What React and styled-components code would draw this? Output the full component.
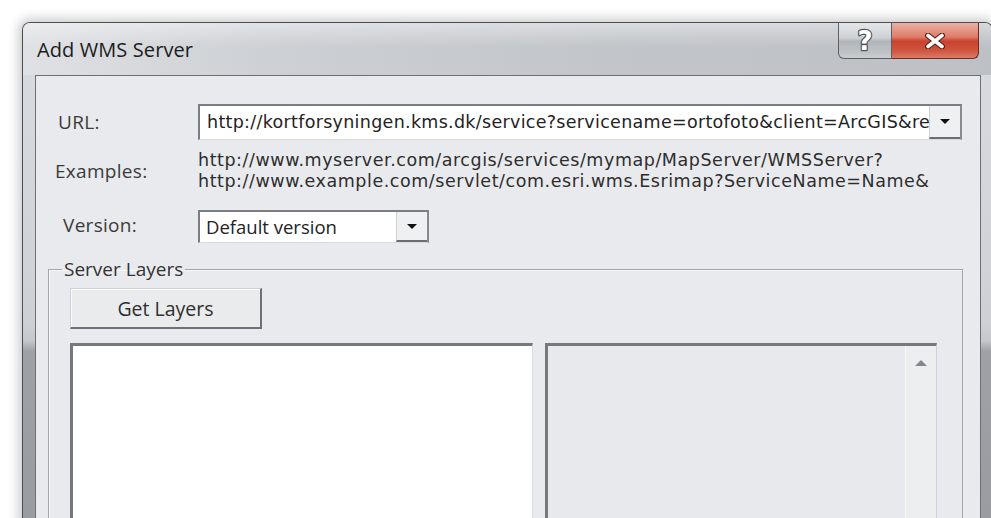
import React from "react";
import styled, { createGlobalStyle } from "styled-components";

const Global = createGlobalStyle`
  html, body { margin: 0; padding: 0; background: #ffffff; overflow: hidden; }
  body { font-family: "Open Sans", "Noto Sans", sans-serif; }
  * { box-sizing: border-box; }
`;

const Page = styled.div`
  width: 991px;
  height: 518px;
  overflow: hidden;
  padding: 22px 0 0 22px;
  background: #ffffff;
`;

const Window = styled.div`
  width: 971px;
  height: 520px;
  border: 1px solid #4a4d51;
  border-bottom: none;
  border-radius: 8px 8px 0 0;
  overflow: hidden;
  box-shadow: 0 0 12px 3px rgba(0, 0, 0, 0.22);
  background: linear-gradient(
    to bottom,
    #d9dce0 0px,
    #cdd0d4 300px,
    #c4c7cb 318px,
    #9ea2a7 328px,
    #989ca1 100%
  );
  display: flex;
  flex-direction: column;
`;

const TitleBar = styled.div`
  height: 52px;
  flex: none;
  display: flex;
  align-items: flex-start;
  justify-content: space-between;
  background:
    linear-gradient(to bottom, rgba(255, 255, 255, 0.4), rgba(255, 255, 255, 0) 45%),
    linear-gradient(to right, #dfe1e4 0%, #cdd0d4 25%, #c2c5c9 60%, #bdc0c4 100%);
`;

const Title = styled.div`
  padding: 15px 0 0 14px;
  font-size: 20px;
  line-height: 24px;
  color: #1c1c1c;
  letter-spacing: 0.1px;
`;

const CaptionButtons = styled.div`
  display: flex;
  margin-right: 13px;
`;

const CaptionButton = styled.div`
  height: 36px;
  width: ${(p) => p.$w}px;
  display: flex;
  align-items: center;
  justify-content: center;
  border: 1px solid ${(p) => (p.$close ? "#6a2c24" : "#5c6064")};
  border-top: none;
  border-radius: ${(p) => (p.$close ? "0 0 6px 0" : "0 0 0 6px")};
  background: ${(p) =>
    p.$close
      ? "linear-gradient(to bottom, #eab0a3 0%, #de7c69 40%, #c8432e 52%, #cf5640 80%, #dc7c66 100%)"
      : "linear-gradient(to bottom, #e4e6e8 0%, #cfd2d5 42%, #b2b6ba 52%, #bec1c4 80%, #cacdd0 100%)"};
  & + & {
    border-left: none;
  }
`;

const Client = styled.div`
  flex: 1;
  margin: 0 11px 0 12px;
  border: 1px solid #6c7075;
  border-bottom: none;
  background: #e9eaed;
  padding-top: 28px;
  display: flex;
  flex-direction: column;
`;

const FormGrid = styled.div`
  display: grid;
  grid-template-columns: 162px minmax(0, 1fr);
  align-items: center;
  padding-right: 18px;
`;

const Label = styled.div`
  padding-left: ${(p) => p.$indent}px;
  margin-top: ${(p) => p.$shift || 0}px;
  font-size: 19px;
  letter-spacing: 0.3px;
  color: #3b3b3b;
`;

const ComboBox = styled.div`
  width: ${(p) => (p.$w ? `${p.$w}px` : "100%")};
  height: ${(p) => p.$h}px;
  margin-top: ${(p) => p.$top || 0}px;
  display: flex;
  min-width: 0;
  background: #ffffff;
  border-top: 2px solid #7b7d80;
  border-left: 2px solid #7b7d80;
  border-right: 2px solid #87898c;
  border-bottom: 1px solid #d9dadc;
`;

const ComboText = styled.div`
  flex: 1;
  min-width: 0;
  overflow: hidden;
  white-space: nowrap;
  padding-left: ${(p) => p.$pad || 6}px;
  font-family: ${(p) => (p.$url ? `"DejaVu Sans", "Open Sans", sans-serif` : `"Open Sans", sans-serif`)};
  font-size: ${(p) => (p.$url ? 17.5 : 18.5)}px;
  letter-spacing: ${(p) => p.$ls || 0}px;
  line-height: ${(p) => p.$lh}px;
  color: #232323;
`;

const DropButton = styled.div`
  width: 31px;
  flex: none;
  display: flex;
  align-items: center;
  justify-content: center;
  background: #eff0f2;
  border-left: 1px solid #cfd0d3;
  border-bottom: 2px solid #6c6e71;
`;

const ExampleLines = styled.div`
  margin-top: 10px;
  font-family: "DejaVu Sans", "Open Sans", sans-serif;
  font-size: 17.5px;
  letter-spacing: 0.55px;
  line-height: 21px;
  color: #2e2e2e;
  white-space: nowrap;
`;

const GroupBox = styled.fieldset`
  margin: 15px 17px 0 12px;
  padding: 8px 25px 0 21px;
  border: 1px solid #a3a5a8;
  border-bottom: none;
  box-shadow: inset 1px 1px 0 #f7f7f8;
  min-width: 0;
  flex: 1;
  display: flex;
  flex-direction: column;
`;

const GroupLegend = styled.legend`
  margin-left: -8px;
  padding: 0 2px;
  font-size: 19px;
  line-height: 22px;
  color: #333333;
`;

const PushButton = styled.div`
  width: 192px;
  height: 41px;
  display: flex;
  align-items: center;
  justify-content: center;
  background: #eaebed;
  border-top: 1px solid #d0d1d3;
  border-left: 1px solid #d0d1d3;
  border-right: 2px solid #6e7074;
  border-bottom: 2px solid #6e7074;
  box-shadow: inset 1px 1px 0 #fafafa;
  font-size: 19.5px;
  color: #2f2f2f;
`;

const ListRow = styled.div`
  margin-top: 14px;
  display: flex;
  gap: 12px;
  flex: 1;
`;

const ListBox = styled.div`
  width: ${(p) => p.$w}px;
  height: 220px;
  flex: none;
  display: flex;
  justify-content: flex-end;
  background: ${(p) => (p.$white ? "#ffffff" : "#e8e9ec")};
  border-top: 3px solid #76787b;
  border-left: 3px solid #76787b;
  border-right: 1px solid ${(p) => (p.$white ? "#dadbdd" : "#d0d1d4")};
`;

const ScrollTrack = styled.div`
  width: 31px;
  display: flex;
  justify-content: center;
  padding-top: 13px;
  background: #eceef0;
  border-left: 1px solid #f6f7f8;
`;

function DownArrow() {
  return (
    <svg width="12" height="7" viewBox="0 0 12 7">
      <path d="M1 1h10L6 6z" fill="#111" />
    </svg>
  );
}

function UpArrow() {
  return (
    <svg width="14" height="8" viewBox="0 0 14 8">
      <path d="M1 7h12L7 1z" fill="#85878a" />
    </svg>
  );
}

function HelpGlyph() {
  return (
    <svg width="22" height="28" viewBox="0 0 22 28">
      <text
        x="11"
        y="23"
        textAnchor="middle"
        fontFamily="DejaVu Sans"
        fontWeight="700"
        fontSize="26"
        fill="#ffffff"
        stroke="#4e5257"
        strokeWidth="2.4"
        strokeLinejoin="round"
        style={{ paintOrder: "stroke fill" }}
      >
        ?
      </text>
    </svg>
  );
}

function CloseGlyph() {
  return (
    <svg width="22" height="16" viewBox="0 0 22 16">
      <path d="M4 2.5l14 11M18 2.5l-14 11" stroke="#5a2018" strokeWidth="6" strokeLinecap="round" />
      <path d="M4 2.5l14 11M18 2.5l-14 11" stroke="#ffffff" strokeWidth="3.6" strokeLinecap="round" />
    </svg>
  );
}

const urlValue =
  "http://kortforsyningen.kms.dk/service?servicename=ortofoto&client=ArcGIS&re";

export default function App() {
  return (
    <>
      <Global />
      <Page>
        <Window>
          <TitleBar>
            <Title>Add WMS Server</Title>
            <CaptionButtons>
              <CaptionButton $w={54}>
                <HelpGlyph />
              </CaptionButton>
              <CaptionButton $w={87} $close>
                <CloseGlyph />
              </CaptionButton>
            </CaptionButtons>
          </TitleBar>
          <Client>
            <FormGrid>
              <Label $indent={22}>URL:</Label>
              <ComboBox $h={36}>
                <ComboText $url $lh={33} $pad={7} $ls={0.3}>{urlValue}</ComboText>
                <DropButton>
                  <DownArrow />
                </DropButton>
              </ComboBox>

              <Label $indent={19} $shift={10}>Examples:</Label>
              <ExampleLines>
                <div>http://www.myserver.com/arcgis/services/mymap/MapServer/WMSServer?</div>
                <div>http://www.example.com/servlet/com.esri.wms.Esrimap?ServiceName=Name&amp;</div>
              </ExampleLines>

              <Label $indent={27} $shift={14}>Version:</Label>
              <ComboBox $w={231} $h={33} $top={18}>
                <ComboText $lh={30}>Default version</ComboText>
                <DropButton>
                  <DownArrow />
                </DropButton>
              </ComboBox>
            </FormGrid>

            <GroupBox>
              <GroupLegend>Server Layers</GroupLegend>
              <PushButton>Get Layers</PushButton>
              <ListRow>
                <ListBox $w={463} $white />
                <ListBox $w={392}>
                  <ScrollTrack>
                    <UpArrow />
                  </ScrollTrack>
                </ListBox>
              </ListRow>
            </GroupBox>
          </Client>
        </Window>
      </Page>
    </>
  );
}
